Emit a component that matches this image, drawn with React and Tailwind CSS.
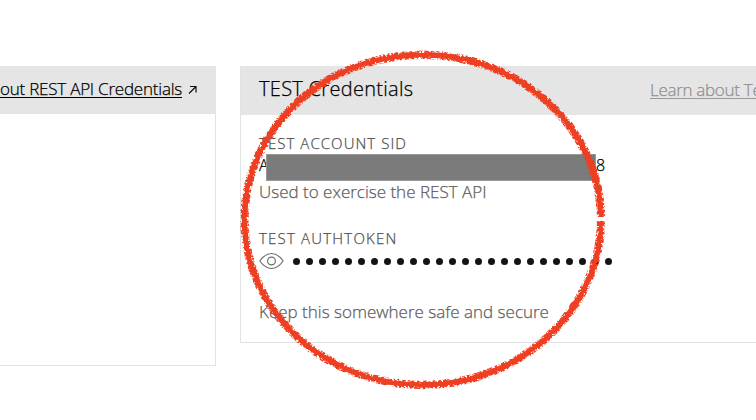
import React from "react";

const DOTS = Array.from({ length: 25 }, (_, i) => i);

const CIRCLE_PATH =
  "M601 217C599.500 126 519 54.800 422.500 54.800C324.500 54.800 244.500 128 244.500 219.500C244.500 311 324.500 385 422.500 385C519.500 385 600 311 601 221";

function EyeIcon() {
  return (
    <svg className="block h-[18px] w-[26px]" viewBox="0 0 26 18" fill="none" stroke="#6d6d6d" strokeWidth="1.2">
      <path d="M0.800 9C4.500 4 8.500 1.500 12.500 1.500S20.500 4 24.200 9C20.500 14 16.500 16.500 12.500 16.500S4.500 14 0.800 9Z" />
      <circle cx="12.500" cy="9" r="3.900" />
    </svg>
  );
}

function ArrowIcon() {
  return (
    <svg className="block h-[10px] w-[10px]" viewBox="0 0 10 10" fill="none" stroke="#111" strokeWidth="1.200">
      <path d="M1 8.500L8 1.500M2 1.500H8V7.500" />
    </svg>
  );
}

function CrayonCircle() {
  return (
    <svg className="pointer-events-none absolute left-0 top-0 h-[420px] w-[756px]" viewBox="0 0 756 420" fill="none" stroke="#ee3f22">
      <defs>
        <filter id="crayon" filterUnits="userSpaceOnUse" x="220" y="30" width="410" height="380" colorInterpolationFilters="sRGB">
          <feTurbulence type="fractalNoise" baseFrequency="0.35" numOctaves="2" seed="8" result="noise" />
          <feDisplacementMap in="SourceGraphic" in2="noise" scale="4" xChannelSelector="R" yChannelSelector="G" />
        </filter>
        <filter id="speckle" filterUnits="userSpaceOnUse" x="220" y="30" width="410" height="380" colorInterpolationFilters="sRGB">
          <feTurbulence type="fractalNoise" baseFrequency="0.4" numOctaves="2" seed="3" />
          <feColorMatrix type="matrix" values="0 0 0 0 0  0 0 0 0 0  0 0 0 0 0  6 0 0 0 -2.6" result="grain" />
          <feComposite in="SourceGraphic" in2="grain" operator="in" />
        </filter>
      </defs>
      <path d={CIRCLE_PATH} strokeWidth="8.4" filter="url(#speckle)" />
      <path d={CIRCLE_PATH} strokeWidth="5.6" filter="url(#crayon)" />
    </svg>
  );
}

export default function App() {
  return (
    <div className="relative flex h-[420px] w-[756px] items-start gap-6 overflow-hidden bg-white pt-[66px] font-['Open_Sans',sans-serif] font-light whitespace-nowrap [-webkit-text-stroke:0.25px_currentColor]">
      <section className="h-[300px] w-[216px] shrink-0 border-r border-b border-[#e2e2e2]">
        <header className="flex h-12 w-[216px] items-center justify-end bg-[#e5e5e5] pr-[18px] text-black">
          <a className="mb-0.5 border-b border-black text-[17px] leading-[17px] tracking-[-0.22px]">out REST API Credentials</a>
          <span className="ml-1.5"><ArrowIcon /></span>
        </header>
      </section>

      <section className="h-[277px] w-[600px] shrink-0 border border-t-0 border-[#e2e2e2]">
        <header className="flex h-[49px] items-center bg-[#e5e5e5] pl-[18px]">
          <h2 className="w-[391px] shrink-0 pb-[3px] text-[20px] leading-6 tracking-[0.3px] text-black">TEST Credentials</h2>
          <a className="mb-0.5 border-b border-[#999] text-[17px] leading-[17px] tracking-[-0.3px] text-[#8f8f8f]">Learn about Te</a>
        </header>
        <div className="pl-[18px] text-[17px] text-[#5e5e5e]">
          <h3 className="pt-[18px] text-[15px] leading-5 tracking-[1.05px] text-[#505050]">TEST ACCOUNT SID</h3>
          <div className="flex h-[27px] items-center text-black">
            <span className="w-[7px] pb-[3px] text-[16px]">A</span>
            <span className="relative mt-px h-[27px] w-[330px] border border-[#999] bg-[#7b7b7b]" />
            <span className="pb-[3px] text-[16px]">8</span>
          </div>
          <p className="relative top-px leading-[22px]">Used to exercise the REST API</p>
          <h3 className="mt-[26px] text-[15px] leading-5 tracking-[1.2px] text-[#505050]">TEST AUTHTOKEN</h3>
          <div className="mt-1 flex h-[18px] items-center">
            <EyeIcon />
            <div className="ml-[7.5px] mt-px flex gap-1.5">
              {DOTS.map((dot) => (
                <span key={dot} className="size-[7px] rounded-full bg-[#141414]" />
              ))}
            </div>
          </div>
          <p className="mt-[31px] leading-[22px]">Keep this somewhere safe and secure</p>
        </div>
      </section>
      <CrayonCircle />
    </div>
  );
}
